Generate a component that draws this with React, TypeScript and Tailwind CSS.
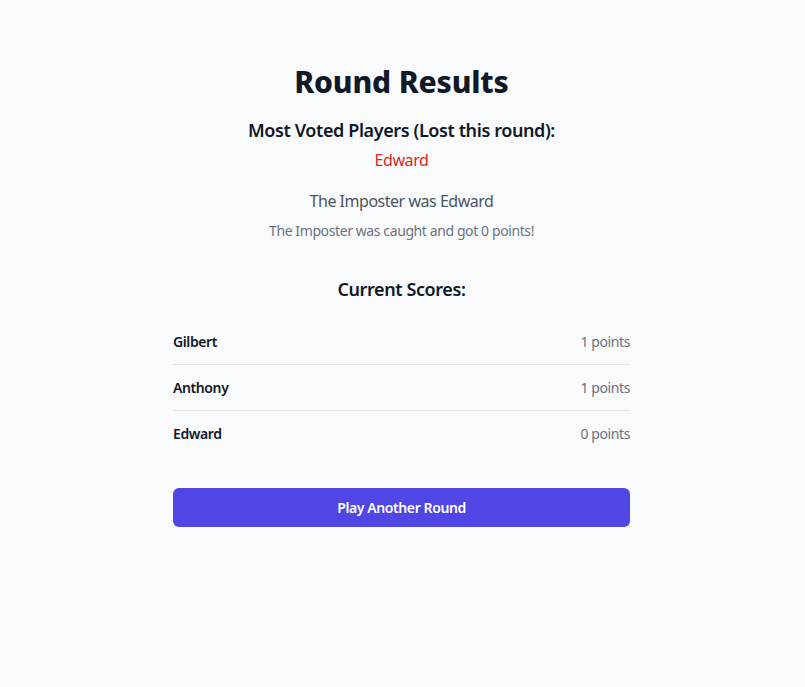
import React from 'react';

const scores = [
  { name: 'Gilbert', points: 1 },
  { name: 'Anthony', points: 1 },
  { name: 'Edward', points: 0 },
];

export default function App() {
  return (
    <div className="min-h-screen bg-[#f9fafb] pr-[2px] font-['Segoe_UI','Noto_Sans',sans-serif] tracking-[-0.025em]">
      <div className="mx-auto w-[457px] pt-16 text-center">
        <h1 className="text-[30px] leading-[36px] font-extrabold tracking-[-0.005em] text-[#111827]">Round Results</h1>
        <h2 className="mt-4 text-lg leading-7 font-semibold text-[#111827]">Most Voted Players (Lost this round):</h2>
        <p className="mt-1 text-base leading-6 text-[#dc2626]">Edward</p>
        <p className="mt-[17px] text-base leading-6 tracking-[-0.03em] text-[#4b5563]">The Imposter was Edward</p>
        <p className="mt-2 text-sm leading-5 text-[#6b7280]">The Imposter was caught and got 0 points!</p>

        <h2 className="mt-[34px] text-lg leading-7 font-semibold text-[#111827]">Current Scores:</h2>
        <ul className="mt-4">
          {scores.map((s, i) => (
            <li
              key={s.name}
              className={`flex items-center justify-between py-3 text-sm leading-[21px] ${i < scores.length - 1 ? 'border-b border-[#e5e7eb]' : ''}`}
            >
              <span className="font-semibold text-[#111827]">{s.name}</span>
              <span className="text-[#6b7280]">{s.points} points</span>
            </li>
          ))}
        </ul>

        <button className="mt-8 h-[39px] w-full rounded-md bg-[#4f46e5] text-sm font-semibold text-white">
          Play Another Round
        </button>
      </div>
    </div>
  );
}
